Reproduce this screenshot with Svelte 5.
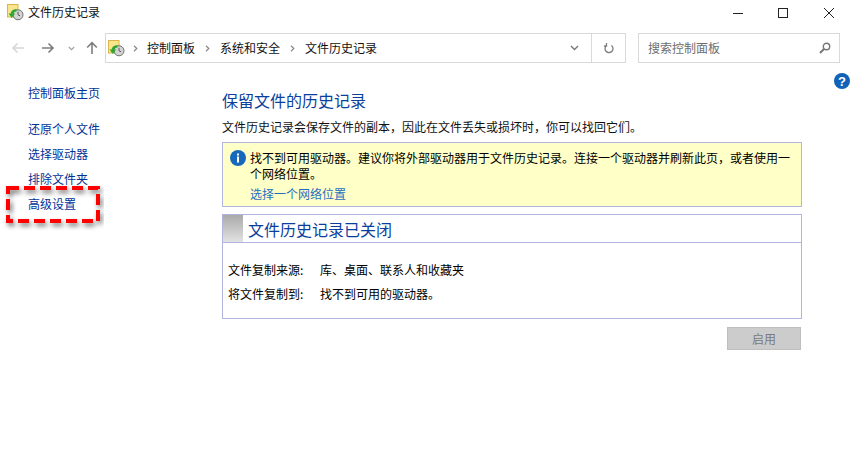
<script lang="ts">
const crumbs = ["控制面板", "系统和安全", "文件历史记录"];
const topLinks = ["还原个人文件", "选择驱动器", "排除文件夹", "高级设置"];
</script>

{#snippet historyIcon()}
	<svg class="history-icon" width="17" height="17" viewBox="0 0 17 17">
		<rect x="0.5" y="0.5" width="10.5" height="12.5" fill="#fbe58c" stroke="#d9b64c" />
		<circle cx="11" cy="10.8" r="5" fill="#d4d4d4" stroke="#6f6f6f" />
		<path d="M11 7.800v3l2 1" fill="none" stroke="#555" />
		<path d="M9.500 6.200C6.500 6.200 4.800 8 4.800 10.500" fill="none" stroke="#2ea82e" stroke-width="2.600" />
		<path d="M1.500 9.500h6.600L4.800 14z" fill="#2ea82e" />
	</svg>
{/snippet}

<div class="window">
	<header class="titlebar">
		{@render historyIcon()}
		<span class="title">文件历史记录</span>
		<div class="controls">
			<svg width="12" height="12" viewBox="0 0 12 12"><path d="M1 6.5h10" stroke="#222" /></svg>
			<svg width="12" height="12" viewBox="0 0 12 12"><rect x="1.5" y="1.5" width="9" height="9" fill="none" stroke="#222" /></svg>
			<svg class="close" width="12" height="12" viewBox="0 0 12 12"><path d="M1 1l10 10M11 1L1 11" stroke="#222" /></svg>
		</div>
	</header>

	<nav class="toolbar">
		<div class="nav-buttons">
			<svg class="back" width="14" height="12" viewBox="0 0 14 12"><path d="M13 6H2M6.500 1.500 2 6l4.500 4.500" fill="none" stroke="#d6d6d6" stroke-width="1.600" /></svg>
			<svg class="forward" width="14" height="12" viewBox="0 0 14 12"><path d="M1 6h11M7.500 1.500 12 6l-4.500 4.500" fill="none" stroke="#7d7d7d" stroke-width="1.600" /></svg>
			<svg class="recent" width="7" height="5" viewBox="0 0 7 5"><path d="M.8 1 3.500 3.700 6.200 1" fill="none" stroke="#a0a0a0" stroke-width="1.200" /></svg>
			<svg class="up" width="12" height="14" viewBox="0 0 12 14"><path d="M6 13V2M1.200 6.500 6 1.700l4.800 4.800" fill="none" stroke="#7d7d7d" stroke-width="1.600" /></svg>
		</div>
		<div class="address">
			{@render historyIcon()}
			{#each crumbs as crumb, i}
				<svg class="sep" class:first={i === 0} width="5" height="7" viewBox="0 0 5 7"><path d="M1 .8 3.800 3.500 1 6.200" fill="none" stroke="#8a8a8a" stroke-width="1.200" /></svg>
				<span>{crumb}</span>
			{/each}
			<div class="address-end">
				<svg width="9" height="6" viewBox="0 0 9 6"><path d="M1 1l3.500 3.500L8 1" fill="none" stroke="#777" stroke-width="1.400" /></svg>
			</div>
			<div class="refresh">
				<svg width="10" height="12" viewBox="0 0 10 12"><path d="M2.600 3.400a4 4 0 1 0 4.800 0M2.500 1v3h-2.500" fill="none" stroke="#7d7d7d" stroke-width="1.300" /></svg>
			</div>
		</div>
		<div class="search">
			<span>搜索控制面板</span>
			<svg width="12" height="12" viewBox="0 0 12 12"><circle cx="7.500" cy="4.500" r="3.200" fill="none" stroke="#777" stroke-width="1.400" /><path d="M5 7 1 11" stroke="#777" stroke-width="2" /></svg>
		</div>
	</nav>

	<div class="help-row">
		<svg width="16" height="16" viewBox="0 0 16 16">
			<circle cx="8" cy="8" r="8" fill="#0f62b8" />
			<text x="8" y="12.500" text-anchor="middle" class="help-mark">?</text>
		</svg>
	</div>

	<div class="body">
		<aside class="sidebar">
			<a class="home">控制面板主页</a>
			{#each topLinks as link}
				<a>{link}</a>
			{/each}
		</aside>

		<main class="content">
			<h1>保留文件的历史记录</h1>
			<p class="intro">文件历史记录会保存文件的副本，因此在文件丢失或损坏时，你可以找回它们。</p>

			<section class="notice">
				<svg class="info" width="16" height="16" viewBox="0 0 16 16">
					<circle cx="8" cy="8" r="8" fill="#1668bd" />
					<rect x="7" y="6.500" width="2" height="6" fill="#fff" />
					<rect x="7" y="3.500" width="2" height="2" fill="#fff" />
				</svg>
				<div class="notice-text">
					<p>找不到可用驱动器。建议你将外部驱动器用于文件历史记录。连接一个驱动器并刷新此页，或者使用一<br />个网络位置。</p>
					<a>选择一个网络位置</a>
				</div>
			</section>

			<section class="status">
				<div class="status-head">
					<div class="swatch"></div>
					<h2>文件历史记录已关闭</h2>
				</div>
				<dl>
					<dt>文件复制来源:</dt>
					<dd>库、桌面、联系人和收藏夹</dd>
					<dt>将文件复制到:</dt>
					<dd>找不到可用的驱动器。</dd>
				</dl>
			</section>

			<div class="actions">
				<button disabled>启用</button>
			</div>
		</main>
	</div>

	<svg class="callout" width="104" height="48" viewBox="0 0 104 48">
		<defs>
			<filter id="callout-shadow" x="-10%" y="-20%" width="125%" height="150%">
				<feDropShadow dx="2" dy="3" stdDeviation="2.500" flood-color="#000" flood-opacity="0.55" />
			</filter>
		</defs>
		<rect x="8" y="3" width="90" height="33" fill="none" stroke="#fe0000" stroke-width="4" stroke-dasharray="11 5" filter="url(#callout-shadow)" />
	</svg>
</div>

<style>
	:global(body) {
		margin: 0;
		background: #fff;
	}

	.window {
		position: relative;
		width: 852px;
		height: 449px;
		overflow: hidden;
		background: #fff;
		color: #000;
		font-family: "Noto Sans CJK SC", "Liberation Sans", sans-serif;
		font-size: 12px;
		line-height: 16px;
	}

	a {
		display: block;
		color: #003399;
	}

	p, h1, h2, dl, dd {
		margin: 0;
		font-weight: 400;
	}

	.titlebar {
		display: flex;
		align-items: center;
		height: 24px;
		padding-left: 7px;
	}

	.title {
		margin-left: 4px;
		color: #111;
	}

	.controls {
		display: flex;
		gap: 33px;
		margin-left: auto;
		margin-right: 17px;
		padding-top: 1px;
	}

	.controls svg {
		display: block;
	}

	.controls .close {
		margin-left: 1px;
	}

	.toolbar {
		display: flex;
		align-items: center;
		height: 30px;
		margin-top: 9px;
	}

	.nav-buttons {
		display: flex;
		align-items: center;
		width: 105px;
		padding-left: 11px;
		box-sizing: border-box;
	}

	.forward {
		margin-left: 16px;
	}

	.recent {
		margin-left: 13px;
	}

	.up {
		margin-left: 11px;
	}

	.address {
		display: flex;
		align-items: center;
		width: 521px;
		height: 30px;
		box-sizing: border-box;
		border: 1px solid #d9d9d9;
		padding-left: 2px;
		color: #111;
	}

	.sep {
		margin: 0 10px;
	}

	.sep.first {
		margin: 0 9px 0 8px;
	}

	.address-end {
		display: flex;
		align-items: center;
		justify-content: center;
		width: 34px;
		height: 100%;
		margin-left: auto;
	}

	.refresh {
		display: flex;
		align-items: center;
		justify-content: center;
		width: 33px;
		height: 100%;
		border-left: 1px solid #d9d9d9;
	}

	.search {
		display: flex;
		align-items: center;
		justify-content: space-between;
		width: 202px;
		height: 30px;
		margin-left: 12px;
		padding: 0 8px 0 9px;
		box-sizing: border-box;
		border: 1px solid #d9d9d9;
		color: #6d6d6d;
	}

	.help-row {
		display: flex;
		justify-content: flex-end;
		height: 16px;
		padding: 10px 2px 0 0;
	}

	.body {
		display: flex;
		margin-top: -4px;
	}

	.sidebar {
		display: flex;
		flex-direction: column;
		gap: 9px;
		width: 222px;
		padding-left: 28px;
		box-sizing: border-box;
	}

	.sidebar .home {
		margin-bottom: 11px;
	}

	.content {
		width: 580px;
	}

	h1 {
		margin-top: 5px;
		font-size: 16px;
		line-height: 20px;
		color: #0a3f9e;
	}

	.intro {
		margin-top: 9px;
		color: #111;
	}

	.notice {
		display: flex;
		gap: 4px;
		height: 65px;
		margin-top: 7px;
		padding: 7px 0 0 7px;
		box-sizing: border-box;
		border: 1px solid #b1b4dc;
		background: #ffffc8;
	}

	.info {
		flex: none;
		margin-top: 0;
	}

	.notice-text {
		flex: 1;
	}

	.notice-text a {
		margin-top: 4px;
		color: #1e6fc0;
	}

	.status {
		height: 105px;
		margin-top: 7px;
		box-sizing: border-box;
		border: 1px solid #b1b4dc;
	}

	.status-head {
		display: flex;
		align-items: center;
		height: 27px;
		border-bottom: 1px solid #b1b4dc;
	}

	.swatch {
		width: 20px;
		height: 100%;
		background: linear-gradient(#a9a9a9, #e2e2e2);
	}

	h2 {
		margin-left: 5px;
		font-size: 16px;
		color: #0a3f9e;
	}

	dl {
		display: grid;
		grid-template-columns: 92px 1fr;
		row-gap: 8px;
		padding: 19px 0 0 5px;
	}

	.actions {
		display: flex;
		justify-content: flex-end;
		margin-top: 8px;
		padding-right: 1px;
	}

	button {
		width: 74px;
		height: 23px;
		padding: 0;
		border: 1px solid #bfbfbf;
		background: #cccccc;
		color: #7a7a7a;
		font: inherit;
	}

	.callout {
		position: absolute;
		left: 0;
		top: 185px;
	}

	.help-mark {
		fill: #fff;
		font-family: "Liberation Sans", sans-serif;
		font-size: 13px;
		font-weight: 700;
	}
</style>
